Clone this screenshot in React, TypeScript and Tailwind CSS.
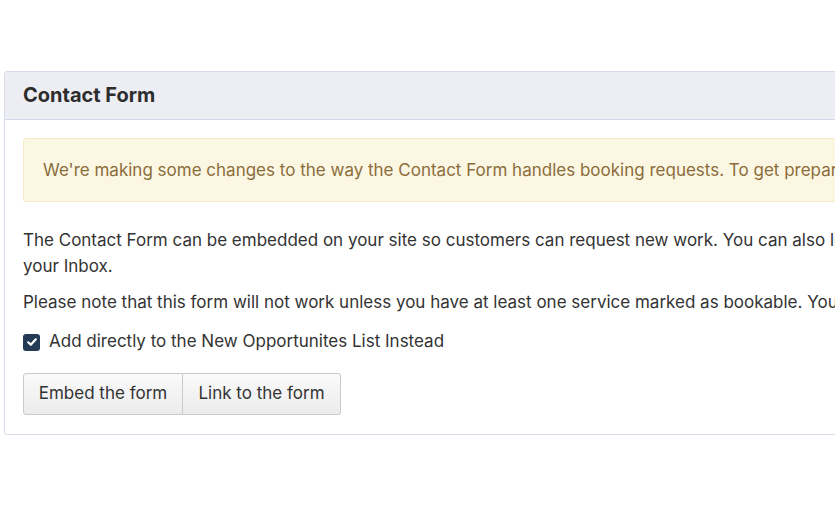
import React from 'react';

export default function App() {
  return (
    <div className="w-[840px] h-[512px] bg-white overflow-hidden pt-[71px] pl-[4px] font-['Inter','Liberation_Sans',sans-serif] text-[#333]">
      <div className="w-[831px] overflow-hidden">
        <div className="w-[1000px] border border-[#d8dbea] rounded-[3px] shadow-[0_1px_2px_rgba(0,0,0,0.06)]">
          {/* Header */}
          <div className="h-[48px] bg-[#edeef4] border-b border-[#d3d7ea] flex items-center px-[18px] pb-[2px]">
            <h2 className="text-[20px] font-bold text-[#2d2d2d]">Contact Form</h2>
          </div>

          {/* Body */}
          <div className="px-[18px] pt-[18px] pb-[19px]">
            <div className="h-[64px] bg-[#fcf7e3] border border-[#f8e8c8] rounded-[3px] flex items-center px-[19px] pt-[2px]">
              <p className="text-[17px] text-[#8a6d3b] whitespace-nowrap">
                We're making some changes to the way the Contact Form handles booking requests. To get prepared, review the new settings below.
              </p>
            </div>

            <p className="mt-[25px] text-[17px] leading-[26px] whitespace-nowrap">
              The Contact Form can be embedded on your site so customers can request new work. You can also link directly to it from
              <br />
              your Inbox.
            </p>

            <p className="mt-[10px] text-[17px] leading-[26px] whitespace-nowrap">
              Please note that this form will not work unless you have at least one service marked as bookable. You can do this in your Services settings.
            </p>

            <label className="mt-[14px] flex items-center h-[26px] text-[17px] whitespace-nowrap">
              <span className="w-[17px] h-[17px] rounded-[3px] bg-[#233b54] flex items-center justify-center mr-[9px]">
                <svg width="12" height="12" viewBox="0 0 12 12" fill="none">
                  <path d="M2.2 6.3 L4.8 8.8 L9.8 3.3" stroke="white" strokeWidth="2.2" strokeLinecap="round" strokeLinejoin="round" />
                </svg>
              </span>
              Add directly to the New Opportunites List Instead
            </label>

            <div className="mt-[18px] flex">
              <button className="h-[42px] w-[160px] bg-gradient-to-b from-[#fafafa] to-[#ececec] border border-[#cacaca] rounded-l-[3px] text-[17px] text-[#333]">
                Embed the form
              </button>
              <button className="h-[42px] w-[158px] bg-gradient-to-b from-[#fafafa] to-[#ececec] border border-l-0 border-[#cacaca] rounded-r-[3px] text-[17px] text-[#333]">
                Link to the form
              </button>
            </div>
          </div>
        </div>
      </div>
    </div>
  );
}
